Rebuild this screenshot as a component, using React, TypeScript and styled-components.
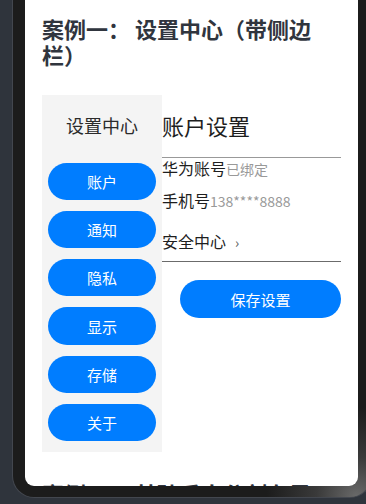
import styled, { createGlobalStyle } from "styled-components";

const GlobalStyle = createGlobalStyle`
  html, body {
    margin: 0;
    padding: 0;
    background: #2f343c;
  }
  body {
    font-family: "Noto Sans CJK SC", "Noto Sans", sans-serif;
  }
`;

// ==================== Frame ====================

const Page = styled.div`
  width: 366px;
  height: 504px;
  overflow: hidden;
  background: #2f343c;
  padding-left: 12px;
  box-sizing: border-box;
`;

const PhoneFrame = styled.div`
  width: 360px;
  height: 498px;
  box-sizing: border-box;
  padding: 0 13px 11px;
  border: 1px solid #43474f;
  border-top: none;
  border-radius: 0 0 22px 22px;
  background: radial-gradient(
    circle at 96% 100%,
    #6a6a6a 0,
    #3a3a3a 40px,
    #1c1c1c 90px
  );
  display: flex;
`;

const Screen = styled.div`
  flex: 1;
  margin-left: -1px;
  background: #ffffff;
  border-radius: 0 0 9px 9px;
  overflow: hidden;
  padding: 14.5px 17px 0;
  display: flex;
  flex-direction: column;
  gap: 28px;
`;

const CaseTitle = styled.h2`
  margin: 0;
  font-size: 22px;
  line-height: 26.2px;
  font-weight: 700;
  color: #30353e;
  flex-shrink: 0;
`;

// ==================== Case layout ====================

const SplitLayout = styled.div`
  display: flex;
  flex-shrink: 0;
`;

const Sidebar = styled.nav`
  width: 120px;
  flex-shrink: 0;
  background: #f4f4f4;
  padding: 18px 6px 11px;
  box-sizing: border-box;
  display: flex;
  flex-direction: column;
  align-items: center;
`;

const SidebarTitle = styled.div`
  font-size: 18px;
  line-height: 24px;
  color: #2b2b2b;
  margin-bottom: 25.7px;
`;

const MenuList = styled.div`
  align-self: stretch;
  display: flex;
  flex-direction: column;
  gap: 11px;
`;

const PillButton = styled.button<{ $width?: string }>`
  height: 37.3px;
  width: ${({ $width }) => $width || "100%"};
  border: none;
  border-radius: 19px;
  background: #007dff;
  color: #ffffff;
  font-family: inherit;
  font-size: 15px;
  padding: 0;
  cursor: pointer;
`;

const Panel = styled.section`
  flex: 1;
  padding-top: 15.5px;
  display: flex;
  flex-direction: column;
`;

const PanelTitle = styled.div`
  font-size: 22px;
  line-height: 30px;
  color: #1e1e1e;
  margin-bottom: 17px;
`;

const Divider = styled.div<{ $tone?: string; $gap?: number }>`
  height: 1px;
  background: ${({ $tone }) => $tone || "#999999"};
  margin-top: ${({ $gap }) => $gap ?? 0}px;
`;

const InfoRow = styled.div<{ $gap?: number }>`
  font-size: 16px;
  line-height: 20px;
  color: #1e1e1e;
  margin-top: ${({ $gap }) => $gap ?? 0}px;
  display: flex;
  align-items: baseline;
`;

const InfoValue = styled.span`
  font-size: 14px;
  color: #999999;
`;

const Chevron = styled.span`
  margin-left: 9px;
  font-size: 14px;
  color: #555555;
`;

const SaveWrap = styled.div`
  margin-top: 18.7px;
  display: flex;
  justify-content: flex-end;
`;

const menu = ["账户", "通知", "隐私", "显示", "存储", "关于"];

export default function App() {
  return (
    <>
      <GlobalStyle />
      <Page>
        <PhoneFrame>
          <Screen>
            <CaseTitle>案例一： 设置中心（带侧边栏）</CaseTitle>
            <SplitLayout>
              <Sidebar>
                <SidebarTitle>设置中心</SidebarTitle>
                <MenuList>
                  {menu.map((m) => (
                    <PillButton key={m}>{m}</PillButton>
                  ))}
                </MenuList>
              </Sidebar>
              <Panel>
                <PanelTitle>账户设置</PanelTitle>
                <Divider />
                <InfoRow>
                  华为账号<InfoValue>已绑定</InfoValue>
                </InfoRow>
                <InfoRow $gap={10.5}>
                  手机号<InfoValue>138****8888</InfoValue>
                </InfoRow>
                <InfoRow $gap={19.8}>
                  安全中心<Chevron>›</Chevron>
                </InfoRow>
                <Divider $tone="#6b6b6b" $gap={9} />
                <SaveWrap>
                  <PillButton $width="161px">保存设置</PillButton>
                </SaveWrap>
              </Panel>
            </SplitLayout>
            <CaseTitle>案例二： 基础垂直分割布局</CaseTitle>
          </Screen>
        </PhoneFrame>
      </Page>
    </>
  );
}
